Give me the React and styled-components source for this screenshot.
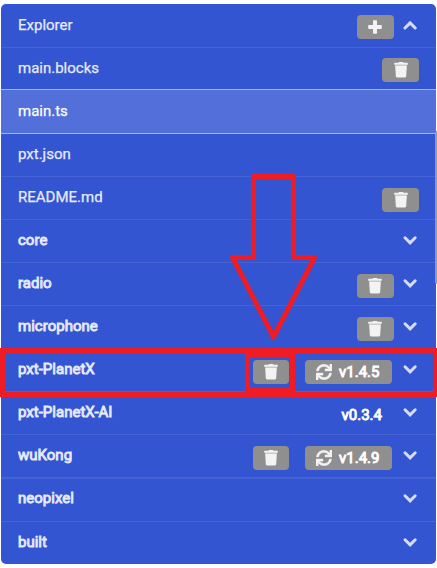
import React from 'react';
import styled, { createGlobalStyle, css } from 'styled-components';
import { FaSync } from 'react-icons/fa';

const Global = createGlobalStyle`
  body { margin: 0; background: #fff; font-family: Roboto, "Liberation Sans", sans-serif; }
  * { box-sizing: border-box; }
`;

const Page = styled.main`
  position: relative;
  width: 437px;
  height: 568px;
  padding: 4px 1px;
  overflow: hidden;
`;

const Panel = styled.nav`
  display: flex;
  flex-direction: column;
  height: 560px;
  border-radius: 5px;
  background: #3455d1;
  overflow: hidden;
`;

const Row = styled.div`
  display: flex;
  flex: none;
  align-items: flex-start;
  height: ${(p) => p.$height || 43}px;
  padding: ${(p) => 11 + (p.$shift || 0)}px 17px 0 17px;
  color: #e6eafb;
  border-bottom: ${(p) => p.$line || 1}px solid #4563d5;
  ${(p) => p.$plain && css`border-bottom: 0;`}
  ${(p) => p.$active && css`
    color: #fff;
    background: #526fda;
    border-top: 1px solid #a3b3eb;
    border-bottom-color: #a3b3eb;
  `}
`;

const Name = styled.span`
  flex: 1;
  margin-top: ${(p) => p.$drop || 0}px;
  font-size: 15px;
  line-height: 18px;
  white-space: nowrap;
  -webkit-text-stroke: 0.25px currentColor;
  ${(p) => p.$bold && css`
    letter-spacing: 0.01px;
    -webkit-text-stroke: 0.85px currentColor;
  `}
`;

const Button = styled.button`
  display: flex;
  flex: none;
  align-items: center;
  justify-content: center;
  width: ${(p) => p.$width || 37}px;
  height: 24px;
  margin: 0 ${(p) => p.$gap || 0}px 0 0;
  padding: 0 ${(p) => (p.$gap === 8 ? 1 : 0)}px 0 0;
  border: 0;
  border-radius: 4px;
  color: #f3f3f3;
  background: #8f8f8f;
  font: 15px Roboto, sans-serif;
`;

const UpdateButton = styled(Button)`
  justify-content: flex-start;
  gap: 7px;
  padding-left: 11px;
`;

const RefreshIcon = styled(FaSync)`
  width: 16px;
  height: 16px;
  stroke: #f3f3f3;
  stroke-width: 12px;
`;

const Version = styled.span`
  color: #fff;
  font-size: 15px;
  line-height: 18px;
  -webkit-text-stroke: 0.9px currentColor;
`;

const PlainVersion = styled(Version)`
  margin: 3px 20px 0 0;
`;

const Chevron = styled.svg`
  flex: none;
  width: 16px;
  height: 12px;
  margin: 3px 1px 0 0;
  fill: none;
  stroke: #d6ddf6;
  stroke-width: 3;
  stroke-linecap: round;
  stroke-linejoin: miter;
`;

const Annotation = styled.svg`
  position: absolute;
  inset: 0;
  fill: none;
  stroke: #ee1c24;
  stroke-width: 5;
  stroke-linejoin: round;
  pointer-events: none;
`;

const Scrollbar = styled.div`
  position: absolute;
  top: 131px;
  right: 0;
  width: 2px;
  height: 153px;
  border-radius: 2px 0 0 2px;
  background: #8f9ba8;
`;

const rows = [
  { name: 'Explorer', height: 44, add: true, open: true, drop: 1 },
  { name: 'main.blocks', height: 41, plain: true, trash: true, shift: -1, drop: 1 },
  { name: 'main.ts', height: 45, active: true, drop: 1 },
  { name: 'pxt.json' },
  { name: 'README.md', trash: true },
  { name: 'core', pkg: true },
  { name: 'radio', pkg: true, trash: true },
  { name: 'microphone', pkg: true, trash: true },
  { name: 'pxt-PlanetX', pkg: true, trash: true, update: 'v1.4.5' },
  { name: 'pxt-PlanetX-AI', pkg: true, version: 'v0.3.4' },
  { name: 'wuKong', height: 44, line: 2, pkg: true, trash: true, update: 'v1.4.9' },
  { name: 'neopixel', pkg: true, shift: -1 },
  { name: 'built', height: 42, plain: true, pkg: true },
];

function TrashIcon() {
  return (
    <svg width="14" height="16" viewBox="0 0.3 14 16" fill="currentColor">
      <path d="M4.5 1 5 0.3H9L9.5 1H13.2Q13.8 1 13.8 1.6V3H0.2V1.6Q0.2 1 0.8 1Z" />
      <path d="M1 3H13V4H1Z" opacity="0.65" />
      <path d="M1.2 4H12.8L12.2 14.6Q12.1 15.7 11 15.7H3Q1.9 15.7 1.8 14.6Z" />
    </svg>
  );
}

function PlusIcon() {
  return (
    <svg width="14" height="14" viewBox="0 0 14 14" fill="currentColor">
      <path d="M5.7 0.3H8.3Q9 .3 9 1V5H13Q13.8 5 13.8 5.8V8.2Q13.8 9 13 9H9V13Q9 13.7 8.3 13.7H5.7Q5 13.7 5 13V9H1Q.2 9 .2 8.2V5.8Q.2 5 1 5H5V1Q5 .3 5.7 .3Z" />
    </svg>
  );
}

function ExplorerRow({ item }) {
  const hasChevron = item.pkg || item.open;
  return (
    <Row
      $height={item.height}
      $line={item.line}
      $plain={item.plain}
      $active={item.active}
      $shift={item.shift}
    >
      <Name $bold={item.pkg} $drop={item.drop}>{item.name}</Name>
      {item.add && <Button $gap={8} aria-label="Add"><PlusIcon /></Button>}
      {item.trash && (
        <Button $width={item.update ? 36 : 37} $gap={item.update ? 16 : hasChevron ? 8 : 0} aria-label="Delete">
          <TrashIcon />
        </Button>
      )}
      {item.update && (
        <UpdateButton $width={87} $gap={10}>
          <RefreshIcon />
          <Version>{item.update}</Version>
        </UpdateButton>
      )}
      {item.version && <PlainVersion>{item.version}</PlainVersion>}
      {hasChevron && (
        <Chevron viewBox="0 0 16 12">
          <path d={item.open ? 'M3 10 8.1 4.9 13.2 10' : 'M3 3.8 8.1 8.9 13.2 3.8'} />
        </Chevron>
      )}
    </Row>
  );
}

export default function App() {
  return (
    <Page>
      <Global />
      <Panel>
        {rows.map((item) => <ExplorerRow key={item.name} item={item} />)}
      </Panel>
      <Scrollbar />
      <Annotation width="437" height="568">
        <path d="M253.5 176.5H293.5V257.5H314.5L273.5 337L232.5 257.5H253.5Z" />
        <rect x="2.5" y="350.5" width="433" height="44" strokeLinejoin="miter" />
        <rect x="247.5" y="355" width="45" height="35.5" strokeLinejoin="miter" />
      </Annotation>
    </Page>
  );
}
